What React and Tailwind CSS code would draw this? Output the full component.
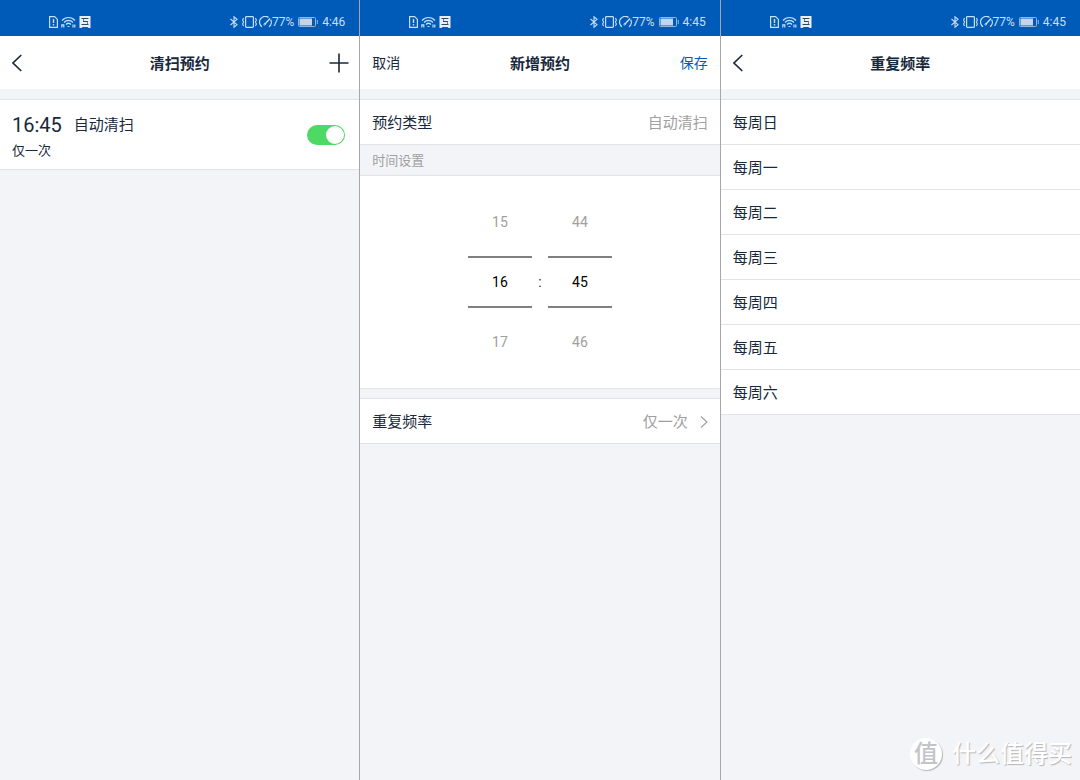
import { useState } from 'react';

const WEEKDAYS = ['每周日', '每周一', '每周二', '每周三', '每周四', '每周五', '每周六'];

const SimIcon = () => (
  <svg width="9" height="12" viewBox="0 0 9 12" fill="none" stroke="currentColor">
    <path d="M.6.6h5L8.400 3.400v8H.6z" strokeWidth="1.200" />
    <path d="M4.500 3v4M4.500 8v1.500" strokeWidth="1.400" />
  </svg>
);

const WifiIcon = () => (
  <svg width="15" height="12" viewBox="0 0 15 12" fill="none" stroke="currentColor" strokeWidth="1.200">
    <path d="M1 4.500C4.500.5 10.500.5 14 4.500M3 6.500c2.500-2.800 6.500-2.800 9 0M5 8.500c1.500-1.500 3.500-1.500 5 0" />
    <path d="M.8 11.500V8.800h2v2.700M12 8.500v3M13.800 8.500v3M6.500 10.500h2" />
  </svg>
);

const NoticeIcon = () => (
  <svg width="12" height="12" viewBox="0 0 12 12" fill="none">
    <path d="M.5 0h11v12H9.500l-1-1h-5l-1 1h-2z" fill="#e8f1fb" />
    <path d="M2.500 2.500h7M4 5.500h4.500M2.500 8.500h7" stroke="#33475c" strokeWidth="1.200" />
    <path d="M4.500 2.500v3M8.500 5v3.500" stroke="#33475c" strokeWidth=".7" />
  </svg>
);

const BluetoothIcon = () => (
  <svg width="8" height="12" viewBox="0 0 8 12" fill="none" stroke="currentColor" strokeWidth="1.100">
    <path d="M.5 3L7 8.700 4 11.200V.8L7 3.300.5 9" />
  </svg>
);

const VibrateIcon = () => (
  <svg width="15" height="12" viewBox="0 0 15 12" fill="none" stroke="currentColor">
    <rect x="3.600" y=".7" width="7.800" height="10.600" rx=".8" strokeWidth="1.200" />
    <path d="M1.600 2L.6 4l1 2-1 2 1 2M13.400 2l1 2-1 2 1 2-1 2" strokeWidth="1.100" />
  </svg>
);

const GaugeIcon = () => (
  <svg width="13" height="12" viewBox="0 0 13 12" fill="none" stroke="currentColor" strokeWidth="1.200">
    <path d="M3 10.800A5.500 5.500 0 0 1 9.500 1.400M11.600 3.600A5.500 5.500 0 0 1 10 10.800" />
    <path d="M6 8L11 2.500" strokeWidth="1.300" />
    <circle cx="5.700" cy="8.300" r=".8" strokeWidth="1" />
  </svg>
);

const BatteryIcon = () => (
  <svg width="20" height="10" viewBox="0 0 20 10" fill="none">
    <rect x=".5" y=".5" width="17" height="9" rx="1" stroke="#8fb9e3" />
    <path d="M1.500 1.500h12.500v7H1.500z" fill="#bfd6ee" />
    <path d="M19.300 3v4" stroke="#8fb9e3" />
  </svg>
);

const BackIcon = () => (
  <svg width="10" height="18" viewBox="0 0 10 18" fill="none" stroke="currentColor" strokeWidth="1.600">
    <path d="M9.300 1L1 9l8.300 8" />
  </svg>
);

const PlusIcon = () => (
  <svg width="20" height="20" viewBox="0 0 20 20" fill="none" stroke="currentColor" strokeWidth="1.600">
    <path d="M10 .5v19M.5 10h19" />
  </svg>
);

const ChevronIcon = () => (
  <svg width="8" height="12" viewBox="0 0 8 12" fill="none" stroke="currentColor" strokeWidth="1.200">
    <path d="M1 .5L7 6l-6 5.500" />
  </svg>
);

const StatusBar = ({ time }) => (
  <div className="flex h-9 items-center justify-between bg-[#005bb8] pt-2 pr-3.5 pl-12 text-[#c9dff5]">
    <div className="flex items-center gap-[3px] pl-px">
      <SimIcon />
      <WifiIcon />
      <NoticeIcon />
    </div>
    <div className="flex items-center text-xs leading-4">
      <BluetoothIcon />
      <span className="ml-1 flex gap-0.5">
        <VibrateIcon />
        <GaugeIcon />
      </span>
      <span>77%</span>
      <span className="mx-1">
        <BatteryIcon />
      </span>
      <span>{time}</span>
    </div>
  </div>
);

const Header = ({ title, left, right }) => (
  <header className="grid h-[53px] grid-cols-[1fr_auto_1fr] items-center bg-white px-3 text-sm text-[#17283a]">
    <div className="flex justify-start">{left}</div>
    <h1 className="pt-0.5 text-[15px] leading-5 font-bold">{title}</h1>
    <div className="flex justify-end">{right}</div>
  </header>
);

const BackButton = () => (
  <button type="button" aria-label="返回" className="flex">
    <BackIcon />
  </button>
);

// Hairlines sit on the outer screens so the middle one keeps its full width.
const Screen = ({ time, children }) => (
  <section className="min-w-0 flex-1 border-[#a5a7ab] first:border-r nth-3:border-l">
    <StatusBar time={time} />
    {children}
  </section>
);

const PickerColumn = ({ label, values, selected, onSelect }) => (
  <div role="group" aria-label={label} className="flex w-16 flex-col">
    {values.map((value) => (
      <button
        key={value}
        type="button"
        aria-pressed={value === selected}
        onClick={() => onSelect(value)}
        className={
          value === selected
            ? 'my-1 h-[52px] border-y-2 border-[#808080] text-black'
            : 'h-[60px] text-[#a0a0a0]'
        }
      >
        {value}
      </button>
    ))}
  </div>
);

const ScheduleList = () => {
  const [enabled, setEnabled] = useState(true);

  return (
    <Screen time="4:46">
      <Header
        title="清扫预约"
        left={<BackButton />}
        right={
          <button type="button" aria-label="新增" className="-mr-0.5 flex">
            <PlusIcon />
          </button>
        }
      />
      <div className="mt-2.5 flex h-[71px] items-center justify-between border-y border-[#e2e3e6] bg-white pr-3.5 pl-3">
        <div className="pt-1">
          <div className="flex items-center gap-3">
            <span className="text-xl leading-7">16:45</span>
            <span className="text-[15px] leading-6">自动清扫</span>
          </div>
          <p className="text-[13px] leading-6">仅一次</p>
        </div>
        <input
          type="checkbox"
          role="switch"
          aria-label="自动清扫"
          checked={enabled}
          onChange={(e) => setEnabled(e.target.checked)}
          className="flex h-5 w-[38px] appearance-none items-center rounded-full bg-gray-300 px-px before:size-[18px] before:rounded-full before:bg-white checked:justify-end checked:bg-[#4cd964]"
        />
      </div>
    </Screen>
  );
};

const ScheduleForm = () => {
  const [hour, setHour] = useState('16');
  const [minute, setMinute] = useState('45');

  return (
    <Screen time="4:45">
      <Header
        title="新增预约"
        left={<button type="button">取消</button>}
        right={
          <button type="button" className="text-[#005bb8]">
            保存
          </button>
        }
      />
      <div className="mt-2.5 flex h-[46px] items-center justify-between border-y border-[#e2e3e6] bg-white px-3 pt-0.5 text-[15px]">
        <span>预约类型</span>
        <span className="text-[#a0a0a0]">自动清扫</span>
      </div>
      <h2 className="flex h-[30px] items-center px-3 pt-0.5 text-[13px] text-[#a0a0a0]">时间设置</h2>
      <div className="flex h-[214px] items-center justify-center border-y border-[#e2e3e6] bg-white text-sm">
        <PickerColumn label="时" values={['15', '16', '17']} selected={hour} onSelect={setHour} />
        <span className="w-4 text-center">:</span>
        <PickerColumn label="分" values={['44', '45', '46']} selected={minute} onSelect={setMinute} />
      </div>
      <button
        type="button"
        className="mt-[9px] flex h-[46px] w-full items-center border-y border-[#e2e3e6] bg-white px-3 pt-0.5 text-[15px]"
      >
        <span>重复频率</span>
        <span className="ml-auto text-[#a0a0a0]">仅一次</span>
        <span className="ml-3 text-[#a0a0a0]">
          <ChevronIcon />
        </span>
      </button>
    </Screen>
  );
};

const RepeatPicker = () => {
  const [days, setDays] = useState([]);

  const toggle = (day) => {
    setDays((prev) => (prev.includes(day) ? prev.filter((d) => d !== day) : [...prev, day]));
  };

  return (
    <Screen time="4:45">
      <Header title="重复频率" left={<BackButton />} />
      <ul className="mt-2.5 border-t border-[#e2e3e6] bg-white text-[15px]">
        {WEEKDAYS.map((day) => (
          <li key={day} className="border-b border-[#e2e3e6]">
            <button
              type="button"
              aria-pressed={days.includes(day)}
              onClick={() => toggle(day)}
              className="flex h-11 w-full items-center px-3 pt-0.5"
            >
              {day}
            </button>
          </li>
        ))}
      </ul>
    </Screen>
  );
};

const App = () => (
  <main className="relative flex min-h-screen bg-[#f3f4f8] font-[Roboto,'Noto_Sans_CJK_SC',sans-serif] text-[#17283a]">
    <ScheduleList />
    <ScheduleForm />
    <RepeatPicker />
    <div className="absolute right-2 bottom-2 flex items-center gap-2.5 text-white text-shadow-[1px_1px_1px_#b5b6ba]">
      <span className="flex size-8 items-center justify-center rounded-full bg-white text-2xl leading-8 font-medium text-[#c3c4c8] shadow-[1px_1px_1px_#b5b6ba] text-shadow-none">
        值
      </span>
      <span className="text-2xl leading-9 font-medium">什么值得买</span>
    </div>
  </main>
);

export default App;
